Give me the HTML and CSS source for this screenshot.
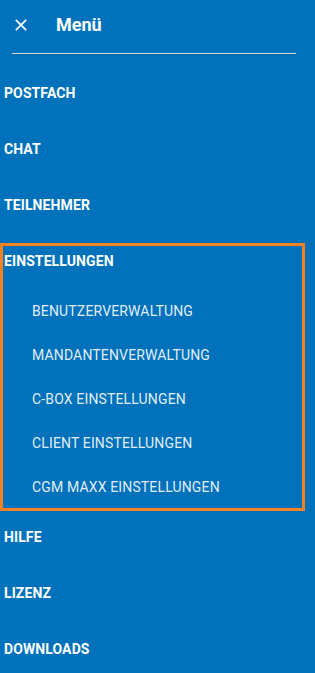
FILE: index.html
```html
<!DOCTYPE html>
<html lang="de">

<head>
  <meta charset="UTF-8">
  <title>Menü</title>
  <link rel="stylesheet" href="styles.css">
</head>

<body>

  <div class="side-menu">

    <!-- Kopf -->
    <div class="menu-head">
      <svg class="menu-close" width="12" height="12" viewBox="0 0 12 12">
        <path d="M0.8 0.8 L11.2 11.2 M11.2 0.8 L0.8 11.2" stroke="#fff" stroke-width="1.7" fill="none" />
      </svg>
      <span class="menu-title">Menü</span>
    </div>

    <!-- Einträge -->
    <div class="menu-list">
      <div class="menu-item">POSTFACH</div>
      <div class="menu-item">CHAT</div>
      <div class="menu-item">TEILNEHMER</div>

      <div class="menu-group">
        <div class="menu-group-title">EINSTELLUNGEN</div>
        <div class="menu-sub">BENUTZERVERWALTUNG</div>
        <div class="menu-sub">MANDANTENVERWALTUNG</div>
        <div class="menu-sub">C-BOX EINSTELLUNGEN</div>
        <div class="menu-sub">CLIENT EINSTELLUNGEN</div>
        <div class="menu-sub">CGM MAXX EINSTELLUNGEN</div>
      </div>

      <div class="menu-item">HILFE</div>
      <div class="menu-item">LIZENZ</div>
      <div class="menu-item">DOWNLOADS</div>
    </div>

  </div>

</body>

</html>
```

FILE: styles.css
```css
* {
  box-sizing: border-box;
}

html,
body {
  height: 100%;
}

body {
  margin: 0;
  overflow: hidden;
  font-family: Roboto, "Liberation Sans", sans-serif;
  background: #0071bb;
  color: #fff;
}

.side-menu {
  width: 100%;
}

.menu-head {
  display: flex;
  align-items: center;
  margin: 0 19px 0 12px;
  padding: 13px 0 16px 3px;
  border-bottom: 1px solid #dcdcdc;
  box-shadow: 0 1px 0 rgba(0, 0, 0, 0.12);
}

.menu-close {
  display: block;
  flex: none;
}

.menu-title {
  margin-left: 29px;
  font-size: 18px;
  font-weight: 700;
  line-height: 24px;
}

.menu-list {
  padding-top: 11px;
}

.menu-item {
  padding: 20px 4px;
  font-size: 14px;
  font-weight: 700;
  line-height: 16px;
  letter-spacing: 0.1px;
}

.menu-group {
  width: 305px;
  margin-top: 10px;
  border: 3px solid #f5821f;
}

.menu-group+.menu-item {
  padding-top: 18px;
}

.menu-group-title {
  padding: 7px 1px 20px;
  font-size: 14px;
  font-weight: 700;
  line-height: 16px;
  letter-spacing: 0.1px;
}

.menu-sub {
  padding: 14px 29px;
  font-size: 14px;
  line-height: 16px;
  letter-spacing: 0.15px;
  color: rgba(255, 255, 255, 0.9);
}

.menu-sub:last-child {
  padding-bottom: 13px;
}
```
